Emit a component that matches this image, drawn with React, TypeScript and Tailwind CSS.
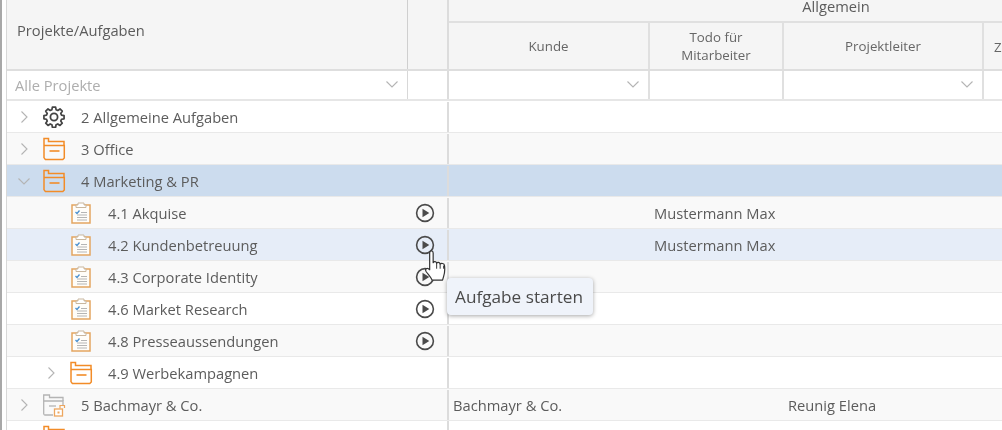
import React from 'react'

type RowIcon = 'gear' | 'folder' | 'task' | 'client'

interface Row {
  label: string
  icon: RowIcon
  level: 0 | 1
  arrow?: 'right' | 'down'
  bg: string
  play?: boolean
  kunde?: string
  todo?: string
  leiter?: string
}

const rows: Row[] = [
  { label: '2 Allgemeine Aufgaben', icon: 'gear', level: 0, arrow: 'right', bg: 'bg-white' },
  { label: '3 Office', icon: 'folder', level: 0, arrow: 'right', bg: 'bg-[#f9f9f9]' },
  { label: '4 Marketing & PR', icon: 'folder', level: 0, arrow: 'down', bg: 'bg-[#ccdcee]' },
  { label: '4.1 Akquise', icon: 'task', level: 1, bg: 'bg-[#f9f9f9]', play: true, todo: 'Mustermann Max' },
  { label: '4.2 Kundenbetreuung', icon: 'task', level: 1, bg: 'bg-[#e6edf8]', play: true, todo: 'Mustermann Max' },
  { label: '4.3 Corporate Identity', icon: 'task', level: 1, bg: 'bg-[#f9f9f9]', play: true },
  { label: '4.6 Market Research', icon: 'task', level: 1, bg: 'bg-white', play: true },
  { label: '4.8 Presseaussendungen', icon: 'task', level: 1, bg: 'bg-[#f9f9f9]', play: true },
  { label: '4.9 Werbekampagnen', icon: 'folder', level: 1, arrow: 'right', bg: 'bg-white' },
  { label: '5 Bachmayr & Co.', icon: 'client', level: 0, arrow: 'right', bg: 'bg-[#f9f9f9]', kunde: 'Bachmayr & Co.', leiter: 'Reunig Elena' },
]

const Chevron = ({ dir }: { dir: 'right' | 'down' }) => (
  <svg width="14" height="14" viewBox="0 0 14 14" fill="none" stroke="#b4b4b4" strokeWidth="1.1">
    {dir === 'right' ? <path d="M4.5 1.5 L10 7 L4.5 12.5" /> : <path d="M1.5 4.5 L7 10 L12.5 4.5" />}
  </svg>
)

const Gear = () => (
  <svg width="24" height="24" viewBox="0 0 24 24" fill="none" stroke="#444" strokeWidth="1.8" strokeLinejoin="round">
    <path d="M10.3 2.6h3.4l.5 2.7 1.8.8 2.3-1.6 2.4 2.4-1.6 2.3.8 1.8 2.7.5v3.4l-2.7.5-.8 1.8 1.6 2.3-2.4 2.4-2.3-1.6-1.8.8-.5 2.7h-3.4l-.5-2.7-1.8-.8-2.3 1.6-2.4-2.4 1.6-2.3-.8-1.8-2.7-.5v-3.4l2.7-.5.8-1.8-1.6-2.3 2.4-2.4 2.3 1.6 1.8-.8z" transform="translate(12 12) scale(0.95) translate(-12 -13)" />
    <circle cx="12" cy="12" r="3.6" />
  </svg>
)

const Folder = () => (
  <svg width="24" height="24" viewBox="0 0 24 24" fill="none" stroke="#f28c28" strokeWidth="1.5">
    <path d="M2 21 V1.5 H6.5 V4.5 H22 V8" />
    <path d="M2 8.5 H22.3 V21 L20.8 22.5 H3.5 L2 21" />
    <path d="M7.5 14 H17.5" strokeWidth="1.6" />
  </svg>
)

const Task = () => (
  <svg width="20" height="22" viewBox="0 0 20 22" fill="none">
    <rect x="1" y="3" width="18" height="18" fill="#fffdf9" stroke="#e3a560" strokeWidth="1.5" />
    <path d="M7 3 V1 H13 V3 H15 V5.5 H5 V3 Z" fill="#fff" stroke="#c9b79f" strokeWidth="1" />
    <path d="M4.5 10 L6 11.5 L8.5 8.5" stroke="#4a90d0" strokeWidth="1.3" />
    <path d="M10 10.5 H16 M6 13 H16 M6 15.5 H16 M6 18 H16" stroke="#b5b5b5" strokeWidth="1" />
  </svg>
)

const ClientFolder = () => (
  <svg width="24" height="24" viewBox="0 0 24 24" fill="none">
    <g stroke="#b4b4b4" strokeWidth="1.3">
      <path d="M1.7 21.5 V2 H7.5 V4.5 H21 V8" />
      <path d="M1.7 8 H21 V13 M11 22 H3 L1.7 21.5" />
      <path d="M7 13 H14" />
    </g>
    <rect x="12.5" y="16" width="8" height="7" fill="#fff" stroke="#eda65e" strokeWidth="1.3" />
    <path d="M18 15.5 V12.5 H22.5 V15" stroke="#eda65e" strokeWidth="1.2" />
    <rect x="15.5" y="18.5" width="2" height="2" fill="#eda65e" />
  </svg>
)

const Play = () => (
  <svg width="20" height="20" viewBox="0 0 20 20">
    <circle cx="10" cy="10" r="8.4" fill="none" stroke="#4a4a4a" strokeWidth="1.6" />
    <path d="M7.5 5.8 L14.3 10 L7.5 14.2 Z" fill="#4a4a4a" />
  </svg>
)

const Hand = () => (
  <svg width="24" height="34" viewBox="0 0 22 30" fill="#fff" stroke="#333" strokeWidth="1.1" strokeLinejoin="round">
    <path d="M5.2 3 C5.2 .6 8.4 .6 8.4 3 V12 C9 10.6 11.4 10.6 11.6 12.6 C12.2 11.2 14.6 11.4 14.8 13.4 C15.6 12.2 18.6 12.4 18.8 14.6 C19.2 18 19.2 21 18 24.5 L17 28 H7.5 C6.5 25.5 4.5 23.5 2.2 20.5 C.4 18 2.6 15.8 5.2 18.4 Z" />
    <path d="M11.6 12.6 V17.5 M14.8 13.4 V17.5 M18 14.6 V17.5" strokeWidth="0.9" />
  </svg>
)

const iconFor = (icon: RowIcon) => {
  if (icon === 'gear') return <Gear />
  if (icon === 'folder') return <Folder />
  if (icon === 'task') return <Task />
  return <ClientFolder />
}

const headCell = 'flex items-center justify-center text-center text-[13.3px] leading-[18px] text-[#666] border-r-2 border-[#e0e0e0]'

export default function App() {
  return (
    <div className="relative flex w-[1002px] h-[430px] overflow-hidden bg-white font-['Open_Sans',sans-serif] text-[#5c5c5c] blur-[0.4px]">
      <div className="w-[7px] shrink-0 border-l-2 border-[#a8a8a8] border-r border-r-[#d8d8d8] bg-white" />
      <div className="flex flex-col flex-1 min-w-0">
        {/* head */}
        <div className="flex h-[71px] shrink-0 bg-[#f5f5f5] border-b-2 border-[#dedede]">
          <div className="w-[401px] shrink-0 pl-[10px] pt-[20px] text-[14.7px] leading-[20px] border-r border-[#cfcfcf]">
            Projekte/Aufgaben
          </div>
          <div className="w-[41px] shrink-0 border-r-2 border-[#dcdcdc]" />
          <div className="flex flex-col flex-1 min-w-0">
            <div className="w-[774px] h-[23px] shrink-0 border-b-2 border-[#e0e0e0] text-center text-[14.7px] leading-[13px]">
              Allgemein
            </div>
            <div className="flex flex-1">
              <div className={`w-[201px] shrink-0 ${headCell}`}>Kunde</div>
              <div className={`w-[134px] shrink-0 ${headCell}`}>
                Todo für
                <br />
                Mitarbeiter
              </div>
              <div className={`w-[200px] shrink-0 ${headCell}`}>Projektleiter</div>
              <div className="pl-[10px] pt-[15px] text-[13.3px] leading-[18px] text-[#666]">Z</div>
            </div>
          </div>
        </div>
        {/* filter */}
        <div className="flex h-[30px] shrink-0 bg-white border-b-2 border-t-0 border-[#e6e6e6]">
          <div className="flex w-[401px] shrink-0 items-center justify-between pl-[8px] pr-[8px] text-[14.7px] text-[#aeaeae] border-r border-[#d8d8d8]">
            <span>Alle Projekte</span>
            <span className="pb-[3px]">
              <Chevron dir="down" />
            </span>
          </div>
          <div className="w-[41px] shrink-0 border-r-2 border-[#dcdcdc]" />
          <div className="flex w-[201px] shrink-0 items-center justify-end pr-[8px] pb-[3px] border-r-2 border-[#e0e0e0]">
            <Chevron dir="down" />
          </div>
          <div className="w-[134px] shrink-0 border-r-2 border-[#e0e0e0]" />
          <div className="flex w-[200px] shrink-0 items-center justify-end pr-[8px] pb-[3px] border-r-2 border-[#e0e0e0]">
            <Chevron dir="down" />
          </div>
        </div>
        {/* rows */}
        {rows.map((row) => (
          <div key={row.label} className={`flex h-[32px] shrink-0 pt-[1px] border-b border-[#e9e9e9] ${row.bg}`}>
            <div className="flex w-[401px] shrink-0 items-center text-[14.7px]">
              <div className={`flex shrink-0 justify-end ${row.level === 1 ? 'w-[51px]' : 'w-[24px]'}`}>
                {row.arrow && <Chevron dir={row.arrow} />}
              </div>
              <div className="flex w-[24px] shrink-0 justify-center ml-[11px]">{iconFor(row.icon)}</div>
              <span className="ml-[15px]">{row.label}</span>
            </div>
            <div className="flex w-[41px] shrink-0 items-center justify-center border-r-2 border-[#dcdcdc] pr-[6px]">
              {row.play && <Play />}
            </div>
            <div className="flex w-[201px] shrink-0 items-center pl-[4px] text-[14.7px]">{row.kunde}</div>
            <div className="flex w-[134px] shrink-0 items-center pl-[4px] text-[14.7px] whitespace-nowrap">{row.todo}</div>
            <div className="flex items-center pl-[4px] text-[14.7px]">{row.leiter}</div>
          </div>
        ))}
        <div className="flex h-[20px] shrink-0 bg-white">
          <div className="w-[401px] shrink-0 pl-[35px] pt-[4px]">
            <Folder />
          </div>
          <div className="w-[41px] shrink-0 border-r-2 border-[#dcdcdc]" />
        </div>
      </div>
      {/* tooltip */}
      <div className="absolute left-[447px] top-[278px] flex h-[37px] w-[146px] items-center justify-center rounded-[4px] bg-[#eff3fa] pr-[2px] text-[17.2px] text-[#4a4a4a] shadow-[0_1px_4px_rgba(0,0,0,0.35)]">
        Aufgabe starten
      </div>
      {/* cursor */}
      <div className="absolute left-[424px] top-[249px]">
        <Hand />
      </div>
    </div>
  )
}
